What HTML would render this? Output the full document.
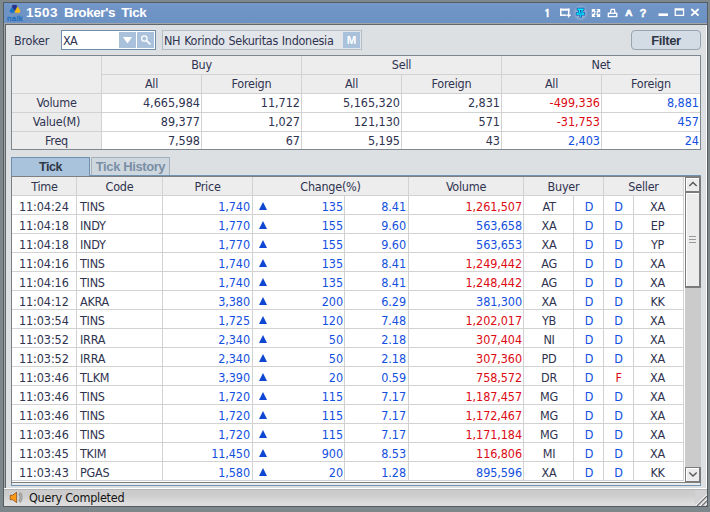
<!DOCTYPE html>
<html><head><meta charset="utf-8"><title>1503 Broker's Tick</title>
<style>
html,body{margin:0;padding:0}
body{width:710px;height:512px;position:relative;overflow:hidden;background:#7e888c;
 font-family:"DejaVu Sans Condensed","Liberation Sans",sans-serif;font-size:12.5px;letter-spacing:-0.25px;color:#2f3350;}
div,span,i,b{position:absolute;box-sizing:border-box;white-space:nowrap}
.frame{left:3px;top:2px;width:705px;height:505px;background:#565d62}
.title{left:4px;top:3px;width:703px;height:20px;background:linear-gradient(#7499c9,#6f94c5 25%,#6c92c4)}
.title .txt{left:22px;top:0;height:20px;line-height:20px;font-family:"Liberation Sans",sans-serif;font-weight:bold;font-size:13.5px;color:#fff;letter-spacing:-0.4px;word-spacing:2.7px}
.title .txt b{position:static;letter-spacing:0.5px}
.gap{left:4px;top:23px;width:703px;height:2px;background:#a4a6a8}
.gapl{left:4px;top:23px;width:1px;height:466px;background:#a4a6a8}
.panelb{left:5px;top:24px;width:702px;height:465px;background:#62676b}
.panelw{left:6px;top:25px;width:701px;height:464px;background:#fff}
.panel{left:6px;top:25px;width:700px;height:463px;background:#dce0e3}
.status{left:4px;top:489px;width:703px;height:17px;background:linear-gradient(#b4b4b4 0,#b4b4b4 1px,#cbcbcb 1px,#cdcdcd 6px,#d3d3d3 9px,#dcdcdc 14px,#dfdfdf 17px)}
.status .txt{left:25px;top:1px;height:16px;line-height:16px;color:#111}
/* toolbar */
.lbl{left:14px;top:31px;height:20px;line-height:20px}
.combo{left:61px;top:30px;width:95px;height:20px;border:1px solid #6f8ca8;background:#fff}
.combo .v{left:1px;top:1px;line-height:18px;letter-spacing:-0.6px}
.btn{background:#a9c1da}
.name{left:162px;top:30px;width:200px;height:20px;border:1px solid #b4bcc4;background:#e2e6ea}
.name .v{left:1px;top:1px;line-height:18px;letter-spacing:-0.3px;word-spacing:0.6px}
.filter{left:631px;top:30px;width:70px;height:20px;border:1px solid #98a4b0;border-radius:4px;background:#d3dce4;text-align:center;line-height:20px;font-family:"Liberation Sans",sans-serif;font-size:13px;letter-spacing:-0.4px;font-weight:bold;color:#2f3646}
/* summary table */
.sum{left:11px;top:55px;width:690px;height:95px;background:#fff;border:1px solid #7f878e}
.sum .h{background:#ededed}
.sum .vl{width:1px;background:#d2d2d2}
.sum .hl{height:1px;background:#d2d2d2}
.sum .t{height:19px;line-height:19px;margin-top:-1px}
.sum .ctr{text-align:center}
.sum .num{text-align:right;letter-spacing:-0.02px}
.b{color:#1450e0}.r{color:#dc0a14}
/* tabs */
.tab1,.tab2{font-family:"Liberation Sans",sans-serif;font-size:13px;letter-spacing:-0.35px}
.tab1{font-size:12.5px;letter-spacing:-0.45px;left:11px;top:157px;width:79px;height:19px;border:1px solid #6f8fae;border-bottom:0;background:#a9c3dc;text-align:center;line-height:18px;font-weight:bold;color:#2f3646}
.tab2{letter-spacing:-0.4px;left:91px;top:157px;width:79px;height:18px;border:1px solid #a5b1bc;border-bottom:0;background:#cfd7de;text-align:center;line-height:17px;font-weight:bold;color:#7a8fa6}
.tabbox{left:11px;top:175px;width:690px;height:311px;border:1px solid #6f93b3;background:#e8ecef}
.grid{left:11px;top:176px;width:690px;height:307px;background:#fff;border:1px solid #7f7f7f;border-right:0}
.ghead{left:12px;top:177px;width:672px;height:19px;background:#ededed}
.hc{top:177px;height:19px;line-height:19px;text-align:center}
.vline{width:1px;background:#d2d2d2}
.hline{left:12px;width:672px;height:1px;background:#d2d2d2}
.row{left:0;width:684px;height:19px;line-height:19px}
.c{top:0;height:19px;line-height:19px}
.tm{left:19px;letter-spacing:-0.1px}
.cd{left:80px}
.pr{left:163px;width:87px;text-align:right;letter-spacing:-0.08px}
.tri{left:259px;width:10px}
.tri i{left:0;top:5px;width:0;height:0;border-left:4.5px solid transparent;border-right:4.5px solid transparent;border-bottom:8px solid #0f46d2}
.ch{left:280px;width:63px;text-align:right;letter-spacing:-0.08px}
.pc{left:345px;width:61px;text-align:right;letter-spacing:-0.08px}
.vo{left:410px;width:112px;text-align:right;letter-spacing:-0.08px}
.by{left:524px;width:50px;text-align:center}
.bt{left:575px;width:28px;text-align:center}
.st{left:604px;width:29px;text-align:center}
.sl{left:633px;width:49px;text-align:center}
/* scrollbar */
.sb{left:685px;top:177px;width:16px;height:305px;background:#cbcbcb}
.sbtn{left:685px;width:16px;height:16px;background:#ececec;border:1px solid #7b7b7b;border-right-width:2px;border-bottom-width:2px;box-shadow:inset 1px 1px 0 #fff}
.sthumb{left:685px;top:191px;width:16px;height:97px;background:#ececec;border:1px solid #7b7b7b;border-right-width:2px;border-bottom-width:2px;border-top-width:2px;box-shadow:inset 1px 1px 0 #fff}
.grip{left:689px;width:7px;height:1px;background:#9a9a9a}

</style></head>
<body>
<div class="frame"></div>
<div class="title">
 <svg style="position:absolute;left:0;top:0" width="26" height="20" viewBox="0 0 26 20">
  <path d="M7.9 4.4 L5.9 7.4 Q5.6 9.6 7.2 9.7 L9.9 9.7 L10.9 7.8 Z" fill="#1b72c4" stroke="#1b72c4" stroke-width="0.3" stroke-linejoin="round"/>
  <path d="M13.5 3.8 L16.1 7.6 Q16.4 9.6 14.8 9.7 L11.3 9.7 L10.9 7.8 Z" fill="#fdb913" stroke="#fdb913" stroke-width="0.3" stroke-linejoin="round"/>
  <path d="M8.9 2 L12.3 2 L13.1 3.6 L10.9 7.7 L7.9 3.9 Z" fill="#27348b" stroke="#27348b" stroke-width="0.3" stroke-linejoin="round"/>
  <text x="11.1" y="17.9" font-size="7.9" text-anchor="middle" fill="#1c6ec0" stroke="#1c6ec0" stroke-width="0.35" font-family="Liberation Sans, sans-serif" letter-spacing="0.45">naik</text>
 </svg>
 <span class="txt"><b>1503</b> Broker's Tick</span>
<svg style="position:absolute;left:536px;top:0" width="167" height="20" viewBox="0 0 167 20" font-family="Liberation Sans, sans-serif" font-weight="bold" fill="#fff">
  <text x="10.6" y="13.7" font-size="11" text-anchor="end" letter-spacing="0" font-family="NanumGothic, Liberation Sans, sans-serif" stroke="#fff" stroke-width="0.5">1</text>
  <g>
   <rect x="20" y="5.6" width="9.5" height="2.1"/><rect x="20" y="5.6" width="1.5" height="7.3"/><rect x="28" y="5.6" width="1.5" height="4.7"/><rect x="20" y="11.4" width="6" height="1.5"/>
   <rect x="26.3" y="11.5" width="4.5" height="1.4"/><rect x="27.9" y="9.9" width="1.4" height="4.5"/>
  </g>
  <g fill="#fff"><ellipse cx="40.5" cy="9.8" rx="7.6" ry="8" opacity="0.07"/><ellipse cx="40.5" cy="9.8" rx="6.4" ry="6.9" opacity="0.09"/><ellipse cx="40.5" cy="9.8" rx="5.3" ry="5.8" opacity="0.11"/><ellipse cx="40.5" cy="9.8" rx="4.2" ry="4.6" opacity="0.13"/></g>
  <g fill="#1a4ca8" stroke="#1a4ca8" stroke-width="1.4" stroke-linejoin="round">
   <rect x="37.4" y="5.5" width="6.3" height="1.6"/><rect x="38.8" y="7" width="3.8" height="2.8"/><rect x="36.5" y="9.6" width="7.9" height="2.2"/><rect x="40.1" y="11.7" width="1.1" height="2.4"/>
  </g>
  <g fill="#00eaff">
   <rect x="37.4" y="5.5" width="6.3" height="1.6"/><rect x="38.8" y="7" width="1.2" height="2.8"/><rect x="41.4" y="7" width="1.2" height="2.8"/><rect x="36.5" y="9.6" width="7.9" height="2.2"/><rect x="40.1" y="11.7" width="1.1" height="2.4"/>
  </g>
  <rect x="38.6" y="10.4" width="3.8" height="0.6" fill="#1a4ca8" opacity="0.8"/>
  <g>
   <path d="M51.8 6 h3.9 l-1.2 1.2 l1.5 1.5 l-1.2 1.2 l-1.5 -1.5 l-1.5 1.5 z"/>
   <path d="M60.2 6 v3.9 l-1.2 -1.2 l-1.5 1.5 l-1.2 -1.2 l1.5 -1.5 l-1.5 -1.5 z"/>
   <path d="M51.8 14 v-3.9 l1.2 1.2 l1.5 -1.5 l1.2 1.2 l-1.5 1.5 l1.5 1.5 z"/>
   <path d="M60.2 14 h-3.9 l1.2 -1.2 l-1.5 -1.5 l1.2 -1.2 l1.5 1.5 l1.5 -1.5 z"/>
  </g>
  <g fill="none" stroke="#fff" stroke-width="1.35">
   <path d="M70.3 10.2 L71.3 6.3 L74.4 6.3 L75 10.2"/>
   <rect x="68.35" y="10.3" width="8.4" height="3.3"/>
  </g>
  <text x="88.8" y="12.8" font-size="9.8" text-anchor="middle" letter-spacing="0" stroke="#fff" stroke-width="0.7">A</text>
  <text x="103" y="14" font-size="11.5" text-anchor="middle" letter-spacing="0" stroke="#fff" stroke-width="0.4">?</text>
  <rect x="118.5" y="10.4" width="9.5" height="2.6"/>
  <path d="M134.6 5.3 h9.6 v7.7 h-9.6 z M135.9 7.6 v4.1 h7 v-4.1 z" fill-rule="evenodd"/>
  <path d="M151.3 6 L158.6 12.7 M158.6 6 L151.3 12.7" stroke="#fff" stroke-width="1.8" fill="none"/>
 </svg>
</div>
<div class="gap"></div><div class="gapl"></div>
<div class="panelb"></div><div class="panelw"></div><div class="panel"></div>
<span class="lbl">Broker</span>
<div class="combo"><span class="v">XA</span>
 <div class="btn" style="left:57px;top:1px;width:17px;height:16px"><svg width="17" height="16" style="position:absolute;left:0;top:0"><path d="M4 5 L13 5 L8.5 11.5 Z" fill="#fff"/></svg></div>
 <div class="btn" style="left:75px;top:1px;width:17px;height:16px"><svg width="17" height="16" style="position:absolute;left:0;top:0"><circle cx="7.3" cy="6.6" r="2.7" fill="none" stroke="#fff" stroke-width="1.25"/><path d="M9.4 8.7 L13.4 12.4" stroke="#fff" stroke-width="1.6" /></svg></div>
</div>
<div class="name"><span class="v">NH Korindo Sekuritas Indonesia</span>
 <div class="btn" style="left:180px;top:1px;width:17px;height:16px;color:#fff;font-family:'Liberation Sans',sans-serif;font-weight:bold;font-size:11.5px;text-align:center;line-height:17px;letter-spacing:0">M</div>
</div>
<div class="filter">Filter</div>

<div class="sum">
 <div class="h" style="left:0;top:0;width:688px;height:38px"></div>
 <div class="h" style="left:0;top:38px;width:89px;height:55px"></div>
 <div class="vl" style="left:89px;top:0;height:93px"></div>
 <div class="vl" style="left:189px;top:19px;height:74px"></div>
 <div class="vl" style="left:289px;top:0;height:93px"></div>
 <div class="vl" style="left:389px;top:19px;height:74px"></div>
 <div class="vl" style="left:489px;top:0;height:93px"></div>
 <div class="vl" style="left:589px;top:19px;height:74px"></div>
 <div class="hl" style="left:90px;top:18px;width:598px"></div>
 <div class="hl" style="left:0;top:37px;width:688px"></div>
 <div class="hl" style="left:0;top:56px;width:688px"></div>
 <div class="hl" style="left:0;top:75px;width:688px"></div>
 <span class="t ctr" style="left:90px;width:199px;top:0">Buy</span>
 <span class="t ctr" style="left:290px;width:199px;top:0">Sell</span>
 <span class="t ctr" style="left:490px;width:198px;top:0">Net</span>
 <span class="t ctr" style="left:90px;width:99px;top:19px">All</span>
 <span class="t ctr" style="left:190px;width:99px;top:19px">Foreign</span>
 <span class="t ctr" style="left:290px;width:99px;top:19px">All</span>
 <span class="t ctr" style="left:390px;width:99px;top:19px">Foreign</span>
 <span class="t ctr" style="left:490px;width:99px;top:19px">All</span>
 <span class="t ctr" style="left:590px;width:98px;top:19px">Foreign</span>
 <span class="t ctr" style="left:0;width:89px;top:38px">Volume</span>
 <span class="t ctr" style="left:0;width:89px;top:57px">Value(M)</span>
 <span class="t ctr" style="left:0;width:89px;top:76px">Freq</span>
 <span class="t num" style="left:90px;width:98px;top:38px">4,665,984</span>
 <span class="t num" style="left:190px;width:98px;top:38px">11,712</span>
 <span class="t num" style="left:290px;width:98px;top:38px">5,165,320</span>
 <span class="t num" style="left:390px;width:98px;top:38px">2,831</span>
 <span class="t num r" style="left:490px;width:98px;top:38px">-499,336</span>
 <span class="t num b" style="left:590px;width:97px;top:38px">8,881</span>
 <span class="t num" style="left:90px;width:98px;top:57px">89,377</span>
 <span class="t num" style="left:190px;width:98px;top:57px">1,027</span>
 <span class="t num" style="left:290px;width:98px;top:57px">121,130</span>
 <span class="t num" style="left:390px;width:98px;top:57px">571</span>
 <span class="t num r" style="left:490px;width:98px;top:57px">-31,753</span>
 <span class="t num b" style="left:590px;width:97px;top:57px">457</span>
 <span class="t num" style="left:90px;width:98px;top:76px">7,598</span>
 <span class="t num" style="left:190px;width:98px;top:76px">67</span>
 <span class="t num" style="left:290px;width:98px;top:76px">5,195</span>
 <span class="t num" style="left:390px;width:98px;top:76px">43</span>
 <span class="t num b" style="left:490px;width:98px;top:76px">2,403</span>
 <span class="t num b" style="left:590px;width:97px;top:76px">24</span>
</div>

<div class="tabbox"></div>
<div class="tab2">Tick History</div>
<div class="tab1">Tick</div>
<div class="grid"></div>
<div class="ghead"></div>
<span class="hc" style="left:13px;width:63px">Time</span>
<span class="hc" style="left:77px;width:85px">Code</span>
<span class="hc" style="left:163px;width:89px">Price</span>
<span class="hc" style="left:253px;width:155px">Change(%)</span>
<span class="hc" style="left:409px;width:114px">Volume</span>
<span class="hc" style="left:524px;width:79px">Buyer</span>
<span class="hc" style="left:604px;width:79px">Seller</span>
<div class="hline" style="top:195px"></div>
<div class="hline" style="top:214px"></div>
<div class="hline" style="top:233px"></div>
<div class="hline" style="top:252px"></div>
<div class="hline" style="top:271px"></div>
<div class="hline" style="top:290px"></div>
<div class="hline" style="top:309px"></div>
<div class="hline" style="top:328px"></div>
<div class="hline" style="top:347px"></div>
<div class="hline" style="top:366px"></div>
<div class="hline" style="top:385px"></div>
<div class="hline" style="top:404px"></div>
<div class="hline" style="top:423px"></div>
<div class="hline" style="top:442px"></div>
<div class="hline" style="top:461px"></div>
<div class="hline" style="top:480px"></div>
<div class="vline" style="left:76px;top:177px;height:304px"></div>
<div class="vline" style="left:162px;top:177px;height:304px"></div>
<div class="vline" style="left:252px;top:177px;height:304px"></div>
<div class="vline" style="left:344px;top:196px;height:285px"></div>
<div class="vline" style="left:408px;top:177px;height:304px"></div>
<div class="vline" style="left:523px;top:177px;height:304px"></div>
<div class="vline" style="left:573px;top:196px;height:285px"></div>
<div class="vline" style="left:603px;top:177px;height:304px"></div>
<div class="vline" style="left:633px;top:196px;height:285px"></div>
<div class="vline" style="left:683px;top:177px;height:304px"></div>
<div class="row" style="top:197px"><span class="c tm">11:04:24</span><span class="c cd">TINS</span><span class="c pr b">1,740</span><span class="c tri"><i></i></span><span class="c ch b">135</span><span class="c pc b">8.41</span><span class="c vo r">1,261,507</span><span class="c by">AT</span><span class="c bt b">D</span><span class="c st b">D</span><span class="c sl">XA</span></div>
<div class="row" style="top:216px"><span class="c tm">11:04:18</span><span class="c cd">INDY</span><span class="c pr b">1,770</span><span class="c tri"><i></i></span><span class="c ch b">155</span><span class="c pc b">9.60</span><span class="c vo b">563,658</span><span class="c by">XA</span><span class="c bt b">D</span><span class="c st b">D</span><span class="c sl">EP</span></div>
<div class="row" style="top:235px"><span class="c tm">11:04:18</span><span class="c cd">INDY</span><span class="c pr b">1,770</span><span class="c tri"><i></i></span><span class="c ch b">155</span><span class="c pc b">9.60</span><span class="c vo b">563,653</span><span class="c by">XA</span><span class="c bt b">D</span><span class="c st b">D</span><span class="c sl">YP</span></div>
<div class="row" style="top:254px"><span class="c tm">11:04:16</span><span class="c cd">TINS</span><span class="c pr b">1,740</span><span class="c tri"><i></i></span><span class="c ch b">135</span><span class="c pc b">8.41</span><span class="c vo r">1,249,442</span><span class="c by">AG</span><span class="c bt b">D</span><span class="c st b">D</span><span class="c sl">XA</span></div>
<div class="row" style="top:273px"><span class="c tm">11:04:16</span><span class="c cd">TINS</span><span class="c pr b">1,740</span><span class="c tri"><i></i></span><span class="c ch b">135</span><span class="c pc b">8.41</span><span class="c vo r">1,248,442</span><span class="c by">AG</span><span class="c bt b">D</span><span class="c st b">D</span><span class="c sl">XA</span></div>
<div class="row" style="top:292px"><span class="c tm">11:04:12</span><span class="c cd">AKRA</span><span class="c pr b">3,380</span><span class="c tri"><i></i></span><span class="c ch b">200</span><span class="c pc b">6.29</span><span class="c vo b">381,300</span><span class="c by">XA</span><span class="c bt b">D</span><span class="c st b">D</span><span class="c sl">KK</span></div>
<div class="row" style="top:311px"><span class="c tm">11:03:54</span><span class="c cd">TINS</span><span class="c pr b">1,725</span><span class="c tri"><i></i></span><span class="c ch b">120</span><span class="c pc b">7.48</span><span class="c vo r">1,202,017</span><span class="c by">YB</span><span class="c bt b">D</span><span class="c st b">D</span><span class="c sl">XA</span></div>
<div class="row" style="top:330px"><span class="c tm">11:03:52</span><span class="c cd">IRRA</span><span class="c pr b">2,340</span><span class="c tri"><i></i></span><span class="c ch b">50</span><span class="c pc b">2.18</span><span class="c vo r">307,404</span><span class="c by">NI</span><span class="c bt b">D</span><span class="c st b">D</span><span class="c sl">XA</span></div>
<div class="row" style="top:349px"><span class="c tm">11:03:52</span><span class="c cd">IRRA</span><span class="c pr b">2,340</span><span class="c tri"><i></i></span><span class="c ch b">50</span><span class="c pc b">2.18</span><span class="c vo r">307,360</span><span class="c by">PD</span><span class="c bt b">D</span><span class="c st b">D</span><span class="c sl">XA</span></div>
<div class="row" style="top:368px"><span class="c tm">11:03:46</span><span class="c cd">TLKM</span><span class="c pr b">3,390</span><span class="c tri"><i></i></span><span class="c ch b">20</span><span class="c pc b">0.59</span><span class="c vo r">758,572</span><span class="c by">DR</span><span class="c bt b">D</span><span class="c st r">F</span><span class="c sl">XA</span></div>
<div class="row" style="top:387px"><span class="c tm">11:03:46</span><span class="c cd">TINS</span><span class="c pr b">1,720</span><span class="c tri"><i></i></span><span class="c ch b">115</span><span class="c pc b">7.17</span><span class="c vo r">1,187,457</span><span class="c by">MG</span><span class="c bt b">D</span><span class="c st b">D</span><span class="c sl">XA</span></div>
<div class="row" style="top:406px"><span class="c tm">11:03:46</span><span class="c cd">TINS</span><span class="c pr b">1,720</span><span class="c tri"><i></i></span><span class="c ch b">115</span><span class="c pc b">7.17</span><span class="c vo r">1,172,467</span><span class="c by">MG</span><span class="c bt b">D</span><span class="c st b">D</span><span class="c sl">XA</span></div>
<div class="row" style="top:425px"><span class="c tm">11:03:46</span><span class="c cd">TINS</span><span class="c pr b">1,720</span><span class="c tri"><i></i></span><span class="c ch b">115</span><span class="c pc b">7.17</span><span class="c vo r">1,171,184</span><span class="c by">MG</span><span class="c bt b">D</span><span class="c st b">D</span><span class="c sl">XA</span></div>
<div class="row" style="top:444px"><span class="c tm">11:03:45</span><span class="c cd">TKIM</span><span class="c pr b">11,450</span><span class="c tri"><i></i></span><span class="c ch b">900</span><span class="c pc b">8.53</span><span class="c vo r">116,806</span><span class="c by">MI</span><span class="c bt b">D</span><span class="c st b">D</span><span class="c sl">XA</span></div>
<div class="row" style="top:463px"><span class="c tm">11:03:43</span><span class="c cd">PGAS</span><span class="c pr b">1,580</span><span class="c tri"><i></i></span><span class="c ch b">20</span><span class="c pc b">1.28</span><span class="c vo b">895,596</span><span class="c by">XA</span><span class="c bt b">D</span><span class="c st b">D</span><span class="c sl">KK</span></div>
<div class="sb"></div>
<div class="sbtn" style="top:177px"></div>
<svg style="position:absolute;left:685px;top:177px" width="16" height="16"><path d="M4.3 9 L8 5.5 L11.7 9" fill="none" stroke="#555" stroke-width="1.3"/></svg>
<div class="sthumb"></div>
<div class="grip" style="top:236px"></div><div class="grip" style="top:239px"></div><div class="grip" style="top:242px"></div>
<div class="sbtn" style="top:467px;height:15px;border-bottom-width:1px"></div>
<svg style="position:absolute;left:685px;top:467px" width="16" height="15"><path d="M4.3 5.5 L8 9 L11.7 5.5" fill="none" stroke="#555" stroke-width="1.3"/></svg>
<div style="left:4px;top:488px;width:703px;height:1px;background:#fff"></div>
<div class="status">
 <svg style="position:absolute;left:5px;top:2px" width="18" height="14" viewBox="0 0 18 14">
  <path d="M1.1 4.1 L3.8 4.1 L7.7 1 L7.7 11.8 L3.8 8.8 L1.1 8.8 Z" fill="none" stroke="#f2f2f2" stroke-width="2.2" stroke-linejoin="round" opacity="0.7"/>
  <path d="M1.1 4.1 L3.8 4.1 L7.7 1 L7.7 11.8 L3.8 8.8 L1.1 8.8 Z" fill="#ff9a14" stroke="#80522c" stroke-width="0.9" stroke-linejoin="round"/>
  <path d="M9.8 2.8 A2.3 4 0 0 1 9.8 10.2" fill="none" stroke="#8a8a8a" stroke-width="1.15"/>
  <path d="M10.7 1.6 A3.5 5.2 0 0 1 10.7 11.4" fill="none" stroke="#9a9a9a" stroke-width="1.15"/>
 </svg>
 <span class="txt">Query Completed</span>
 <svg style="position:absolute;left:691px;top:1px" width="12" height="16" viewBox="0 0 12 16">
  <rect x="0" y="0" width="12" height="16" fill="#d2d2d4"/>
  <path d="M0.6 16 L12 4.6 M5.4 16 L12 9.4 M10 16 L12 14" stroke="#fff" stroke-width="1.2"/>
  <path d="M1.9 16 L12 5.9 M6.7 16 L12 10.7 M11.2 16 L12 15.2" stroke="#6e6e6e" stroke-width="1.2"/>
 </svg>
</div>

</body></html>
